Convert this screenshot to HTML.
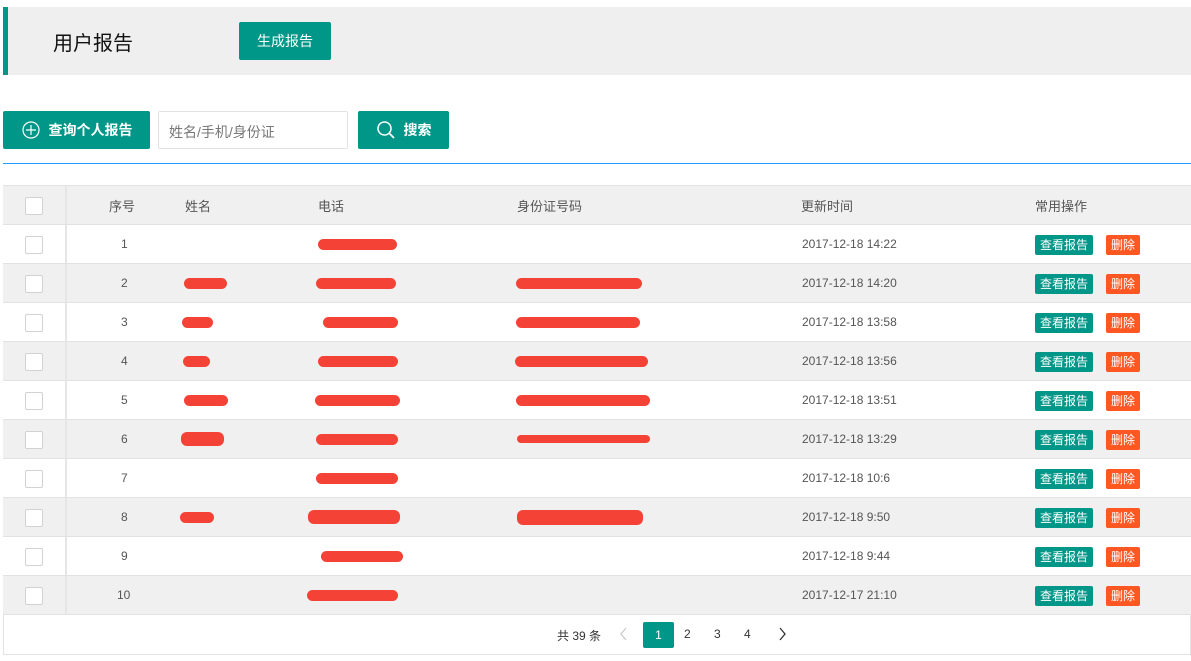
<!DOCTYPE html><html><head><meta charset="utf-8"><style>
*{margin:0;padding:0;box-sizing:border-box}
body{width:1191px;height:661px;background:#fff;font-family:"Liberation Sans","Noto Sans CJK SC",sans-serif;position:relative;overflow:hidden;color:#333}
.a{position:absolute}
.top{left:3px;top:7px;width:1188px;height:68px;background:#efefef;border-left:5px solid #009688}
.btn{background:#009688;color:#fff;border-radius:2px;display:flex;align-items:center;justify-content:center;font-size:14px}
.row{position:absolute;left:3px;width:1188px;height:39px;border-bottom:1px solid #e2e2e2;font-size:12px;color:#555}
.row.g{background:#f0f0f0}
.cb{position:absolute;left:22px;top:11px;width:18px;height:18px;border:1px solid #d2d2d2;background:#fff;border-radius:2px}
.sep{position:absolute;left:62px;top:0;width:2px;height:100%;background:#e6e6e6}
.c{position:absolute;top:12px}
.r{position:absolute;height:11px;background:#f44336;border-radius:6px;top:14px}
.v{position:absolute;left:1032px;top:10px;width:58px;height:20px;background:#009688;color:#fff;font-size:12px;line-height:20px;text-align:center;border-radius:2px}
.d{position:absolute;left:1103px;top:10px;width:34px;height:20px;background:#ff5722;color:#fff;font-size:12px;line-height:20px;text-align:center;border-radius:2px}
</style></head><body>
<div class="a top"></div>
<div class="a" style="left:53px;top:27px;font-size:20px;color:#111">用户报告</div>
<div class="a btn" style="left:239px;top:22px;width:92px;height:38px">生成报告</div>
<div class="a btn" style="left:3px;top:111px;width:147px;height:38px;font-weight:bold"><svg width="20" height="20" viewBox="0 0 20 20" style="margin-right:8px"><circle cx="10" cy="10" r="8" fill="none" stroke="#fff" stroke-width="1.2"/><path d="M10 5v10M5 10h10" stroke="#fff" stroke-width="1.2"/></svg>查询个人报告</div>
<div class="a" style="left:158px;top:111px;width:190px;height:38px;border:1px solid #e2e2e2;border-radius:2px;font-size:14px;color:#777;padding:10px 0 0 10px">姓名/手机/身份证</div>
<div class="a btn" style="left:358px;top:111px;width:91px;height:38px;font-weight:bold"><svg width="20" height="20" viewBox="0 0 20 20" style="margin-right:8px"><circle cx="8.5" cy="8.5" r="6.5" fill="none" stroke="#fff" stroke-width="1.5"/><path d="M13 13l5 5" stroke="#fff" stroke-width="1.8"/></svg>搜索</div>
<div class="a" style="left:3px;top:163px;width:1188px;height:0;border-top:1px solid #1e9fff"></div>
<div class="row g" style="top:185px;height:40px;border-top:1px solid #e2e2e2;font-size:13px;color:#555"><div class="cb"></div><div class="sep"></div>
<div class="c" style="left:106px;top:10px">序号</div><div class="c" style="left:182px;top:10px">姓名</div><div class="c" style="left:315px;top:10px">电话</div><div class="c" style="left:514px;top:10px">身份证号码</div><div class="c" style="left:798px;top:10px">更新时间</div><div class="c" style="left:1032px;top:10px">常用操作</div></div>

<div class="row" style="top:225px"><div class="cb"></div><div class="sep"></div><div class="c" style="left:118px">1</div><div class="r" style="left:315px;width:79px"></div><div class="c" style="left:799px">2017-12-18 14:22</div><div class="v">查看报告</div><div class="d">删除</div></div>
<div class="row g" style="top:264px"><div class="cb"></div><div class="sep"></div><div class="c" style="left:118px">2</div><div class="r" style="left:181px;width:43px"></div><div class="r" style="left:313px;width:80px"></div><div class="r" style="left:513px;width:126px"></div><div class="c" style="left:799px">2017-12-18 14:20</div><div class="v">查看报告</div><div class="d">删除</div></div>
<div class="row" style="top:303px"><div class="cb"></div><div class="sep"></div><div class="c" style="left:118px">3</div><div class="r" style="left:179px;width:31px"></div><div class="r" style="left:320px;width:75px"></div><div class="r" style="left:513px;width:124px"></div><div class="c" style="left:799px">2017-12-18 13:58</div><div class="v">查看报告</div><div class="d">删除</div></div>
<div class="row g" style="top:342px"><div class="cb"></div><div class="sep"></div><div class="c" style="left:118px">4</div><div class="r" style="left:180px;width:27px"></div><div class="r" style="left:315px;width:80px"></div><div class="r" style="left:512px;width:133px"></div><div class="c" style="left:799px">2017-12-18 13:56</div><div class="v">查看报告</div><div class="d">删除</div></div>
<div class="row" style="top:381px"><div class="cb"></div><div class="sep"></div><div class="c" style="left:118px">5</div><div class="r" style="left:181px;width:44px"></div><div class="r" style="left:312px;width:85px"></div><div class="r" style="left:513px;width:134px"></div><div class="c" style="left:799px">2017-12-18 13:51</div><div class="v">查看报告</div><div class="d">删除</div></div>
<div class="row g" style="top:420px"><div class="cb"></div><div class="sep"></div><div class="c" style="left:118px">6</div><div class="r" style="left:178px;width:43px;height:14px;top:12px"></div><div class="r" style="left:313px;width:82px"></div><div class="r" style="left:514px;width:133px;height:8px;top:15px"></div><div class="c" style="left:799px">2017-12-18 13:29</div><div class="v">查看报告</div><div class="d">删除</div></div>
<div class="row" style="top:459px"><div class="cb"></div><div class="sep"></div><div class="c" style="left:118px">7</div><div class="r" style="left:313px;width:82px"></div><div class="c" style="left:799px">2017-12-18 10:6</div><div class="v">查看报告</div><div class="d">删除</div></div>
<div class="row g" style="top:498px"><div class="cb"></div><div class="sep"></div><div class="c" style="left:118px">8</div><div class="r" style="left:177px;width:34px"></div><div class="r" style="left:305px;width:92px;height:14px;top:12px"></div><div class="r" style="left:514px;width:126px;height:15px;top:12px"></div><div class="c" style="left:799px">2017-12-18 9:50</div><div class="v">查看报告</div><div class="d">删除</div></div>
<div class="row" style="top:537px"><div class="cb"></div><div class="sep"></div><div class="c" style="left:118px">9</div><div class="r" style="left:318px;width:82px"></div><div class="c" style="left:799px">2017-12-18 9:44</div><div class="v">查看报告</div><div class="d">删除</div></div>
<div class="row g" style="top:576px"><div class="cb"></div><div class="sep"></div><div class="c" style="left:114px">10</div><div class="r" style="left:304px;width:91px"></div><div class="c" style="left:799px">2017-12-17 21:10</div><div class="v">查看报告</div><div class="d">删除</div></div>

<div class="a" style="left:3px;top:615px;width:1188px;height:40px;border:1px solid #e2e2e2;border-top:none"></div>
<div class="a" style="left:557px;top:627px;font-size:12px;color:#333">共 39 条</div>
<svg class="a" style="left:619px;top:627px" width="10" height="14" viewBox="0 0 10 14"><path d="M7 1L2 7l5 6" fill="none" stroke="#ccc" stroke-width="1.3"/></svg>
<div class="a" style="left:643px;top:622px;width:31px;height:26px;background:#009688;color:#fff;border-radius:2px;font-size:12px;line-height:26px;text-align:center">1</div>
<div class="a" style="left:684px;top:627px;font-size:12px">2</div>
<div class="a" style="left:714px;top:627px;font-size:12px">3</div>
<div class="a" style="left:744px;top:627px;font-size:12px">4</div>
<svg class="a" style="left:777px;top:627px" width="10" height="14" viewBox="0 0 10 14"><path d="M3 1l5 6-5 6" fill="none" stroke="#333" stroke-width="1.3"/></svg>
</body></html>
